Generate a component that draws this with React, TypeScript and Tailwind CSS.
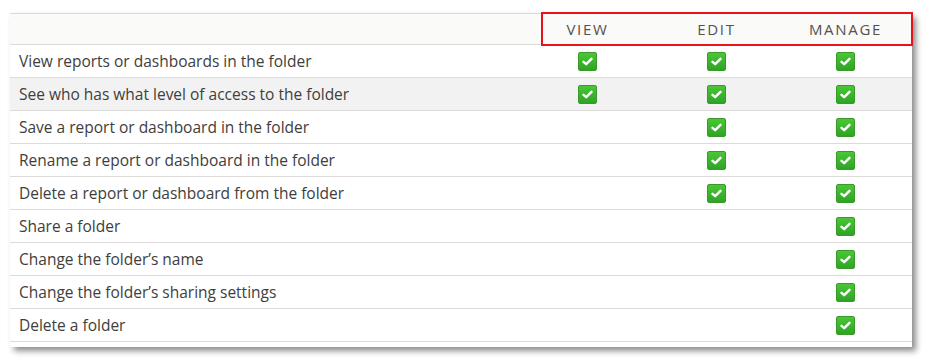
import React from "react";

type Perm = { label: string; view: boolean; edit: boolean; manage: boolean };

const rows: Perm[] = [
  { label: "View reports or dashboards in the folder", view: true, edit: true, manage: true },
  { label: "See who has what level of access to the folder", view: true, edit: true, manage: true },
  { label: "Save a report or dashboard in the folder", view: false, edit: true, manage: true },
  { label: "Rename a report or dashboard in the folder", view: false, edit: true, manage: true },
  { label: "Delete a report or dashboard from the folder", view: false, edit: true, manage: true },
  { label: "Share a folder", view: false, edit: false, manage: true },
  { label: "Change the folder’s name", view: false, edit: false, manage: true },
  { label: "Change the folder’s sharing settings", view: false, edit: false, manage: true },
  { label: "Delete a folder", view: false, edit: false, manage: true },
];

const Check: React.FC = () => (
  <div className="w-[19px] h-[19px] rounded-[2px] border border-[#3a9a28] bg-gradient-to-b from-[#4ac636] to-[#2ea426] flex items-center justify-center">
    <svg width="11" height="9" viewBox="0 0 11 9">
      <path
        d="M1.5 4.8 L4.2 7.2 L9.5 1.8"
        fill="none"
        stroke="#ffffff"
        strokeWidth="2.4"
        strokeLinecap="round"
        strokeLinejoin="round"
      />
    </svg>
  </div>
);

const Cell: React.FC<{ on: boolean }> = ({ on }) => (
  <div className="w-[129px] flex items-center justify-center">{on && <Check />}</div>
);

export default function App() {
  return (
    <div
      className="w-[929px] h-[364px] bg-white pt-[13px] pl-[10px]"
      style={{ fontFamily: "'Open Sans', Lato, sans-serif" }}
    >
      <div className="relative w-[902px] bg-white shadow-[4px_4px_6px_rgba(0,0,0,0.45)] pb-[5px]">
        {/* header */}
        <div className="flex h-[32px] bg-[#fafaf9] border-y border-[#dddbda] text-[15px] tracking-[1.7px] text-[#54514f]">
          <div className="w-[513px]" />
          <div className="w-[129px] flex items-center justify-center">VIEW</div>
          <div className="w-[129px] flex items-center justify-center">EDIT</div>
          <div className="w-[129px] flex items-center justify-center">MANAGE</div>
        </div>

        {rows.map((r, i) => (
          <div
            key={r.label}
            className={`flex h-[33px] border-b border-[#dddbda] ${i === 1 ? "bg-[#f3f2f2]" : ""}`}
          >
            <div className="w-[513px] flex items-center pl-[9px] pt-[2px] text-[15.5px] text-[#3e3e3c]">{r.label}</div>
            <Cell on={r.view} />
            <Cell on={r.edit} />
            <Cell on={r.manage} />
          </div>
        ))}

        {/* annotation box around permission columns */}
        <div className="absolute left-[531px] top-[-1px] w-[372px] h-[34px] border-2 border-[#e8121b]" />
      </div>
    </div>
  );
}
